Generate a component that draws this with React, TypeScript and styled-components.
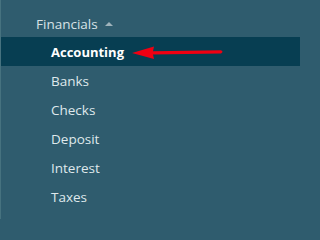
import React from 'react';
import styled, { createGlobalStyle } from 'styled-components';

const GlobalStyle = createGlobalStyle`
  html, body {
    margin: 0;
    padding: 0;
    background: #2f5c6e;
  }
`;

const Sidebar = styled.nav`
  width: 300px;
  height: 219px;
  box-sizing: border-box;
  background: #2f5c6e;
  border-left: 1px solid #46727f;
  font-family: 'Open Sans', 'DejaVu Sans', sans-serif;
  font-size: 13.5px;
  overflow: hidden;
`;

const Heading = styled.div`
  display: flex;
  align-items: center;
  box-sizing: border-box;
  height: 37px;
  padding: 14px 0 3px 35px;
  line-height: 20px;
  color: #d7e2e6;
`;

const Caret = styled.span`
  display: inline-block;
  margin-left: 7px;
  margin-top: -1px;
  width: 0;
  height: 0;
  border-left: 4px solid transparent;
  border-right: 4px solid transparent;
  border-bottom: 4px solid #9fb3bb;
`;

const List = styled.ul`
  list-style: none;
  margin: 0;
  padding: 0;
`;

const Item = styled.li<{ $active?: boolean }>`
  position: relative;
  display: flex;
  align-items: center;
  height: 29px;
  padding-left: 50px;
  color: ${(p) => (p.$active ? '#ffffff' : '#dfe8ec')};
  font-weight: ${(p) => (p.$active ? 700 : 400)};
  font-size: ${(p) => (p.$active ? '13px' : '13.5px')};
  background: ${(p) => (p.$active ? '#073e52' : 'transparent')};
`;

const Pointer = styled.svg`
  position: absolute;
  left: 129px;
  top: 6px;
`;

const items = ['Accounting', 'Banks', 'Checks', 'Deposit', 'Interest', 'Taxes'];

const App: React.FC = () => (
  <>
    <GlobalStyle />
    <Sidebar>
      <Heading>
        Financials
        <Caret />
      </Heading>
      <List>
        {items.map((name, i) => (
          <Item key={name} $active={i === 0}>
            {name}
            {i === 0 && (
              <Pointer width="96" height="18" viewBox="0 0 96 18">
                <path d="M2 10 L24 3.5 L23 8.2 L91 7.2 Q94 8.6 91 10.4 L23 11.4 L24 16 Z" fill="#f00012" />
              </Pointer>
            )}
          </Item>
        ))}
      </List>
    </Sidebar>
  </>
);

export default App;
